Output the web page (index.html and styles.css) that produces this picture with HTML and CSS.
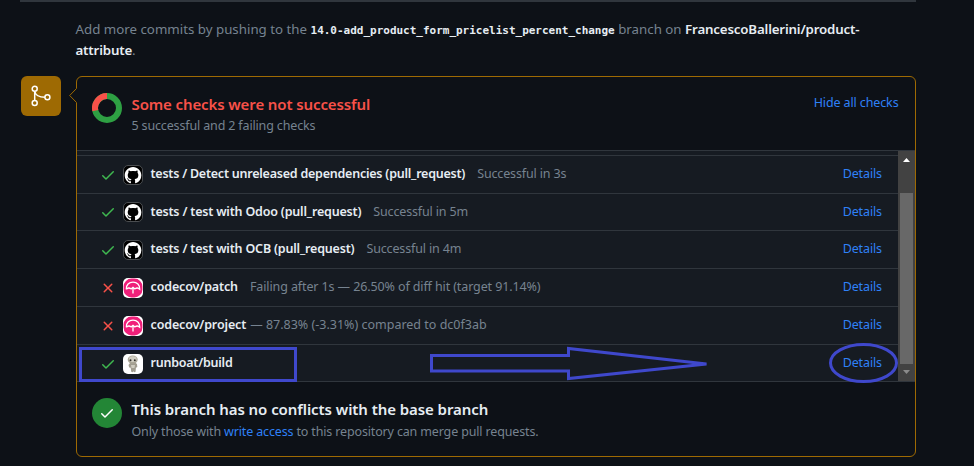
FILE: index.html
```html
<!DOCTYPE html>
<html lang="en">
<head>
<meta charset="utf-8">
<title>Pull request checks</title>
<link rel="stylesheet" href="styles.css">
</head>
<body>
<svg class="defs" width="0" height="0" aria-hidden="true">
  <symbol id="check" viewBox="0 0 16 16"><path d="M13.78 4.22a.75.75 0 0 1 0 1.06l-7.25 7.25a.75.75 0 0 1-1.06 0L2.22 9.28a.75.75 0 0 1 1.06-1.06L6 10.94l6.72-6.72a.75.75 0 0 1 1.06 0z"/></symbol>
  <symbol id="cross" viewBox="0 0 16 16"><path d="M3.72 3.72a.75.75 0 0 1 1.06 0L8 6.94l3.22-3.22a.75.75 0 1 1 1.06 1.06L9.06 8l3.22 3.22a.75.75 0 1 1-1.06 1.06L8 9.06l-3.22 3.22a.75.75 0 0 1-1.06-1.06L6.94 8 3.72 4.78a.75.75 0 0 1 0-1.06z"/></symbol>
  <symbol id="github" viewBox="0 0 20 20">
    <rect x=".5" y=".5" width="19" height="19" rx="4.5" fill="#000" stroke="#4a4d50"/>
    <path transform="translate(1.7 2) scale(1.04)" fill="#fff" d="M8 0C3.58 0 0 3.58 0 8c0 3.54 2.29 6.53 5.47 7.59.4.07.55-.17.55-.38 0-.19-.01-.82-.01-1.49-2.01.37-2.53-.49-2.69-.94-.09-.23-.48-.94-.82-1.13-.28-.15-.68-.52-.01-.53.63-.01 1.08.58 1.23.82.72 1.21 1.87.87 2.33.66.07-.52.28-.87.51-1.07-1.78-.2-3.64-.89-3.64-3.95 0-.87.31-1.59.82-2.15-.08-.2-.36-1.02.08-2.12 0 0 .67-.21 2.2.82.64-.18 1.32-.27 2-.27s1.36.09 2 .27c1.53-1.04 2.2-.82 2.2-.82.44 1.1.16 1.92.08 2.12.51.56.82 1.27.82 2.15 0 3.07-1.87 3.75-3.65 3.95.29.25.54.73.54 1.48 0 1.07-.01 1.93-.01 2.2 0 .21.15.46.55.38A8.01 8.01 0 0 0 16 8c0-4.42-3.58-8-8-8z"/>
  </symbol>
  <symbol id="codecov" viewBox="0 0 20 20">
    <rect width="20" height="20" rx="5" fill="#fff"/>
    <rect x=".6" y=".6" width="18.800" height="18.800" rx="8" fill="#f01f7a"/>
    <path d="M3.300 11.200C3.100 6.800 6 4.100 10 4.100s6.900 2.700 6.700 7.100c-1.600-1.400-3.200-1.500-4.600-.4M3.300 11.200c1.600-1.400 3.200-1.500 4.600-.4M7.700 11.200L10 9.300l2.300 1.900M10 9.300v6.200" fill="none" stroke="#fff" stroke-width="1.300"/>
  </symbol>
  <symbol id="robot" viewBox="0 0 20 20">
    <rect width="20" height="20" rx="5" fill="#fff"/>
    <path d="M7 9l-1.500 2 .7 2.500 1.500.3.500 4 1.500.4.700-1 .8 1 1.400-.4.3-4 1.400-.8L14 10l-2-1.500z" fill="#a19d90"/>
    <path d="M8 11h4l-.5 3h-3z" fill="#cfccc0"/>
    <ellipse cx="9.700" cy="5.700" rx="5" ry="4.100" fill="#aaa697"/>
    <ellipse cx="9.700" cy="5.100" rx="3.900" ry="2.900" fill="#d2cfc3"/>
    <circle cx="7.500" cy="6.200" r="1" fill="#34322d"/><circle cx="11.800" cy="6.200" r="1" fill="#34322d"/>
  </symbol>
</svg>

<main class="page">
  <p class="push-hint">
    <span>Add more commits by pushing to the</span> <code>14.0-add_product_form_pricelist_percent_change</code> <span>branch on</span> <strong class="repo">FrancescoBallerini/product-<br>attribute</strong>.
  </p>

  <section class="merge">
    <div class="badge">
      <svg width="24" height="24" viewBox="0 0 24 24" fill="none" stroke="#fff" stroke-width="1.500"><circle cx="5.700" cy="4.800" r="2.500"/><circle cx="5.700" cy="19" r="2.500"/><circle cx="18.400" cy="13.200" r="2.500"/><path d="M5.700 7.300v9.200M5.700 7.300c.8 3.900 3.600 5.900 10.200 5.900"/></svg>
    </div>
    <div class="box">
      <svg class="caret" width="8" height="16" viewBox="0 0 8 16"><path d="M8 0L.7 7.500 8 15z" fill="#0d1117"/><path d="M7.500.5L.7 7.500l6.800 7" fill="none" stroke="#9e6a03"/></svg>
      <header class="status">
        <svg class="donut" width="30" height="30" viewBox="0 0 30 30" fill="none" stroke-width="6"><circle cx="15" cy="15" r="12" stroke="#2ea043"/><path d="M3.300 17.670A12 12 0 0 1 15 3" stroke="#f85149"/></svg>
        <div class="summary">
          <h2 class="fail"><span class="t-fail">Some checks were not successful</span></h2>
          <p><span class="t-count">5 successful and 2 failing checks</span></p>
        </div>
        <a class="hide">Hide all checks</a>
      </header>

      <div class="checks">
        <div class="list">
          <div class="row"><svg class="state ok"><use href="#check"/></svg><svg class="avatar"><use href="#github"/></svg><strong class="n1">tests / Detect unreleased dependencies (pull_request)</strong><span class="note s1">Successful in 3s</span><a>Details</a></div>
          <div class="row short"><svg class="state ok"><use href="#check"/></svg><svg class="avatar"><use href="#github"/></svg><strong class="n2">tests / test with Odoo (pull_request)</strong><span class="note s1">Successful in 5m</span><a>Details</a></div>
          <div class="row"><svg class="state ok"><use href="#check"/></svg><svg class="avatar"><use href="#github"/></svg><strong class="n2">tests / test with OCB (pull_request)</strong><span class="note s1">Successful in 4m</span><a>Details</a></div>
          <div class="row"><svg class="state bad"><use href="#cross"/></svg><svg class="avatar"><use href="#codecov"/></svg><strong class="n4">codecov/patch</strong><span class="note s4">Failing after 1s — 26.50% of diff hit (target 91.14%)</span><a>Details</a></div>
          <div class="row"><svg class="state bad"><use href="#cross"/></svg><svg class="avatar"><use href="#codecov"/></svg><strong class="n4">codecov/project</strong><span class="note tight">— 87.83% (-3.31%) compared to dc0f3ab</span><a>Details</a></div>
          <div class="row"><svg class="state ok"><use href="#check"/></svg><svg class="avatar"><use href="#robot"/></svg><strong class="n1">runboat/build</strong><a>Details</a></div>
        </div>
        <div class="scrollbar">
          <svg width="17" height="42" viewBox="0 0 17 42"><path d="M5 11l3.500-4L12 11z" fill="#fff"/></svg>
          <div class="thumb"></div>
          <svg width="17" height="17" viewBox="0 0 17 17"><path d="M5 6h7l-3.500 4z" fill="#8b8b8b"/></svg>
        </div>
        <svg class="marks" width="838" height="42" viewBox="0 0 838 42" fill="none" stroke="#3f48cc" stroke-width="3">
          <rect x="3.500" y="7.500" width="215" height="32"/>
          <path d="M354.500 14.500h137v-7l138 15.500-138 14.500v-7.500h-137z"/>
          <ellipse cx="786.500" cy="22" rx="33" ry="18.500"/>
        </svg>
      </div>

      <footer class="status branch">
        <div class="round"><svg width="16" height="16"><use href="#check"/></svg></div>
        <div class="summary">
          <h2><span class="t-branch">This branch has no conflicts with the base branch</span></h2>
          <p><span class="t-only">Only those with <a>write access</a> to this repository can merge pull requests.</span></p>
        </div>
      </footer>
    </div>
  </section>
</main>
</body>
</html>
```
FILE: styles.css
```css
* { box-sizing: border-box; }
body {
  margin: 0;
  height: 466px;
  overflow: hidden;
  background: #0d1117;
  color: #768390;
  font: 12.5px/20px "Noto Sans", sans-serif;
}
.defs { position: absolute; }
h2, p { margin: 0; }
a { color: #2f81f7; }
strong, h2 { color: #e6edf3; font-weight: 600; }
.page {
  width: 895px;
  margin-left: 21px;
}
.push-hint {
  height: 76px;
  margin-left: -1px;
  padding: 17px 0 0 55.5px;
  border-top: 2px solid #30363d;
  font-size: 13.3px;
  line-height: 21px;
  white-space: nowrap;
}
.push-hint code {
  color: #e6edf3;
  font: bold 11px "DejaVu Sans Mono", monospace;
  letter-spacing: -0.01px;
}
.repo { letter-spacing: -0.17px; }
.merge { display: flex; gap: 15px; }
.badge {
  display: grid;
  place-items: center;
  width: 40px;
  height: 40px;
  border-radius: 6px;
  background: #9e6a03;
}
.box {
  position: relative;
  width: 840px;
  height: 381px;
  border: 1px solid #9e6a03;
  border-radius: 6px;
}
.caret { position: absolute; left: -8px; top: 11px; }
.status {
  display: flex;
  height: 73px;
  padding: 16px 16px 0 15px;
}
.summary { flex: 1; margin-left: 9.5px; }
h2 { font-size: 15px; line-height: 22px; }
.summary p { line-height: 22px; }
.fail { color: #f85149; }
.t-fail { letter-spacing: -0.11px; }
.t-count { letter-spacing: -0.15px; }
.t-branch { letter-spacing: -0.07px; }
.t-only { letter-spacing: -0.15px; }
.hide { line-height: 20px; margin-right: 0.5px; letter-spacing: -0.12px; }
.checks {
  position: relative;
  display: flex;
  height: 232px;
  border: solid #30363d;
  border-width: 1px 0;
  background: #161b22;
}
.list { flex: 1; padding-top: 4px; }
.row {
  display: flex;
  align-items: center;
  height: 38px;
  padding: 0 16px 0 23px;
  border-top: 1px solid #30363d;
  white-space: nowrap;
}
.row.short { height: 37px; }
.row strong, .row span, .row a { padding-bottom: 2px; }
.row.short strong, .row.short span, .row.short a { padding-bottom: 0; }
.state { width: 16px; height: 16px; margin-right: 7px; }
.ok { fill: #3fb950; }
.bad { fill: #f85149; }
.avatar { width: 20px; height: 20px; margin-right: 7.5px; }
.n1 { letter-spacing: -0.23px; }
.n2 { letter-spacing: -0.19px; }
.n4 { letter-spacing: -0.13px; }
.note { margin-left: 12px; }
.note.tight { margin-left: 4px; }
.s1 { letter-spacing: -0.15px; }
.s4 { letter-spacing: -0.11px; }
.row a { margin-left: auto; letter-spacing: -0.12px; }
.scrollbar { width: 17px; background: #424242; display: flex; flex-direction: column; }
.thumb { flex: 1; width: 13px; margin-left: 2px; background: #686868; }
.marks { position: absolute; left: 0; bottom: -2px; }
.branch { height: 74px; }
.branch p { line-height: 24px; }
.round {
  display: grid;
  place-items: center;
  width: 30px;
  height: 30px;
  border-radius: 50%;
  background: #238636;
  fill: #fff;
}
```
